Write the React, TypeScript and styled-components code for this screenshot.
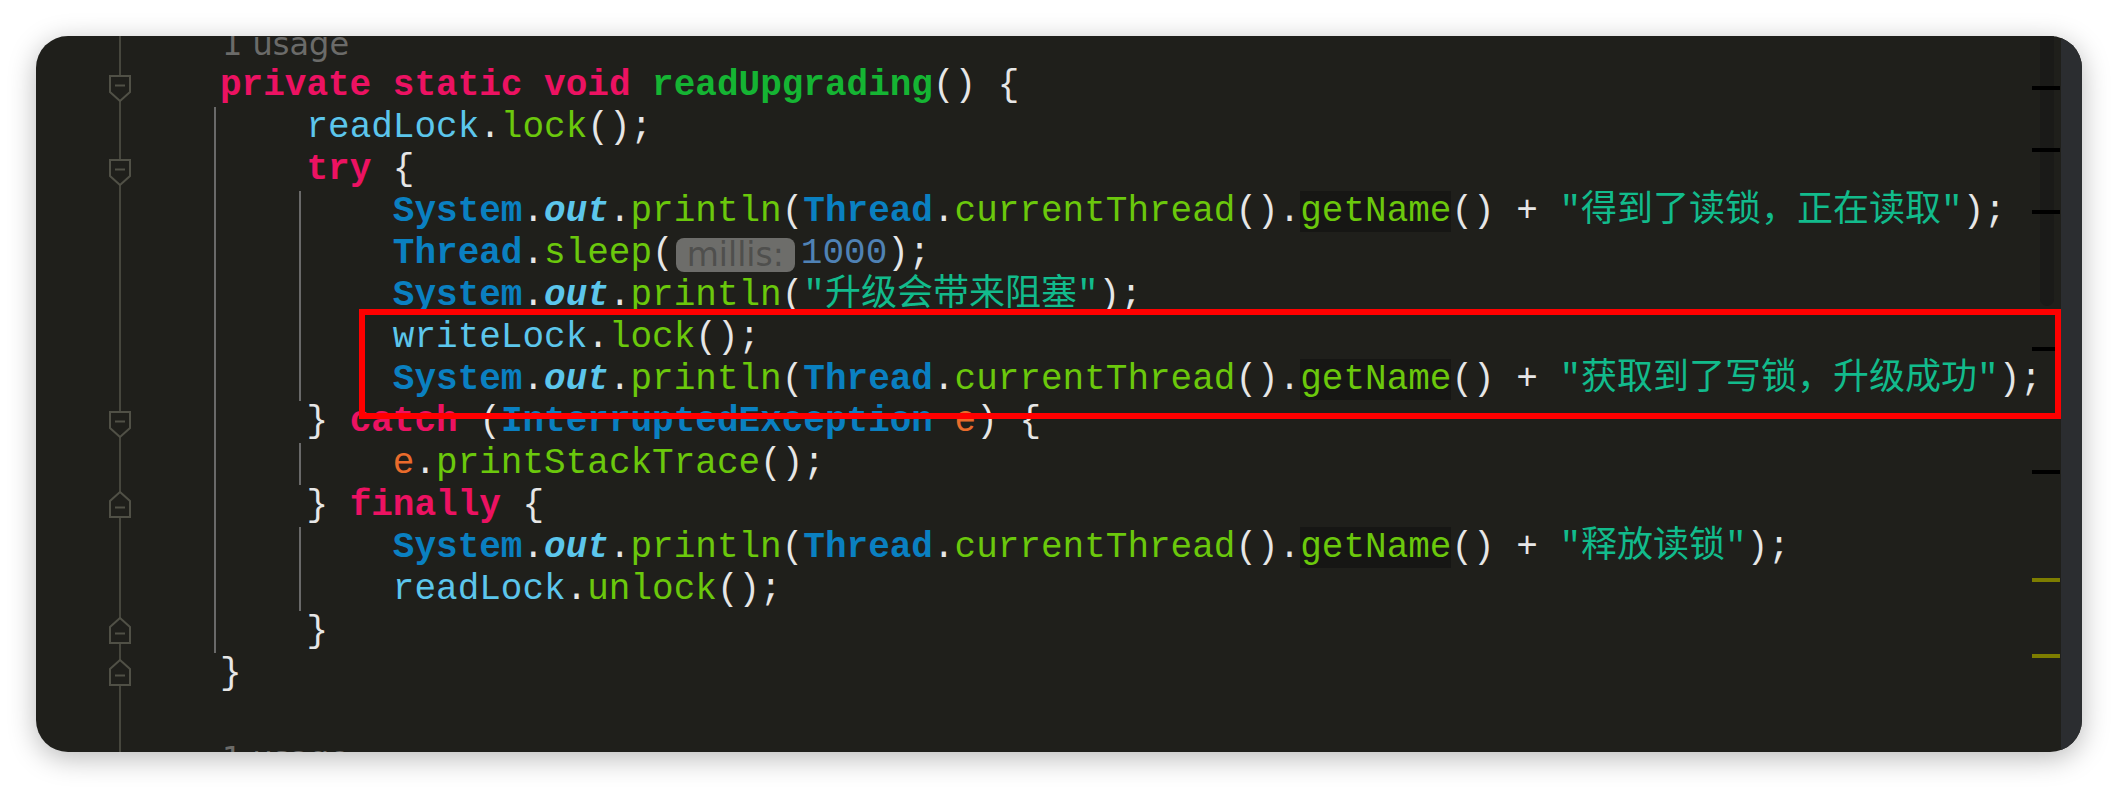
import React from 'react';
import styled, { createGlobalStyle, css } from 'styled-components';

const GlobalStyle = createGlobalStyle`
  html, body { margin: 0; padding: 0; background: #ffffff; }
  body { width: 2118px; height: 788px; overflow: hidden; }
`;

const Page = styled.div`
  box-sizing: border-box;
  width: 2118px;
  height: 788px;
  padding: 36px 0 0 36px;
`;

const Window = styled.div`
  position: relative;
  display: flex;
  width: 2046px;
  height: 716px;
  border-radius: 32px;
  overflow: hidden;
  background: #1f1f1b;
  box-shadow: 0 6px 28px rgba(0, 0, 0, 0.28);
`;

const Editor = styled.div`
  position: relative;
  flex: 1;
  overflow: hidden;
`;

const Lines = styled.div`
  display: flex;
  flex-direction: column;
  margin-top: -12.6px;
`;

const Row = styled.div`
  display: grid;
  grid-template-columns: 184px 1fr;
  height: 42px;
`;

const GutterCell = styled.div`
  display: flex;
  align-items: flex-start;
  padding-left: 73px;
  background: linear-gradient(
    to right,
    transparent 83px,
    #46463d 83px,
    #46463d 85px,
    transparent 85px
  );
`;

const MarkerSvg = styled.svg<{ $up?: boolean }>`
  display: block;
  width: 22px;
  height: 27px;
  margin-top: ${(p) => (p.$up ? '6px' : '10px')};
`;

const FoldMarker = ({ up }: { up?: boolean }) => (
  <MarkerSvg $up={up} viewBox="0 0 22 27">
    {up ? (
      <>
        <path d="M11 1 L21 10 V26 H1 V10 Z" fill="#1f1f1b" stroke="#505046" strokeWidth="2" strokeLinejoin="miter" />
        <line x1="6" y1="16.5" x2="16" y2="16.5" stroke="#505046" strokeWidth="2" />
      </>
    ) : (
      <>
        <path d="M1 1 H21 V17 L11 26 L1 17 Z" fill="#1f1f1b" stroke="#505046" strokeWidth="2" strokeLinejoin="miter" />
        <line x1="6" y1="10.5" x2="16" y2="10.5" stroke="#505046" strokeWidth="2" />
      </>
    )}
  </MarkerSvg>
);

const CodeCell = styled.div`
  position: relative;
  white-space: pre;
  font-family: 'Liberation Mono', 'Noto Sans CJK SC', monospace;
  font-size: 36px;
  line-height: 42px;
  color: #e6e6e6;
`;

const Guide = styled.span<{ $level: number }>`
  position: absolute;
  top: 0;
  bottom: 0;
  width: 2px;
  left: ${(p) => (p.$level === 1 ? '-6px' : '79px')};
  background: #696969;
`;

type Kind = 'kw' | 'fn' | 'field' | 'call' | 'cls' | 'out' | 'str' | 'param' | 'num';

const colors: Record<Kind, string> = {
  kw: '#ec1262',
  fn: '#15b433',
  field: '#5cc6ec',
  call: '#6bc80c',
  cls: '#0a80c1',
  out: '#5cc6ec',
  str: '#12bb8c',
  param: '#e96b2b',
  num: '#4f82b5',
};

const Tok = styled.span<{ $k: Kind }>`
  color: ${(p) => colors[p.$k]};
  ${(p) =>
    (p.$k === 'kw' || p.$k === 'fn' || p.$k === 'cls' || p.$k === 'out') &&
    css`
      font-weight: bold;
    `}
  ${(p) =>
    p.$k === 'out' &&
    css`
      font-style: italic;
    `}
`;

const Highlight = styled.span`
  background: #161614;
  color: ${colors.call};
`;

const UsageHint = styled.span`
  font-family: 'DejaVu Sans', sans-serif;
  font-size: 32px;
  color: #6b6b69;
  padding-left: 2px;
  vertical-align: 3px;
`;

const ParamHint = styled.span`
  display: inline-block;
  vertical-align: top;
  height: 34px;
  margin: 5px 6px 0 2px;
  padding: 0 11px;
  border-radius: 8px;
  background: #6d6d6a;
  color: #4f4f4d;
  font-family: 'DejaVu Sans', sans-serif;
  font-size: 33px;
  line-height: 34px;
`;

const Thumb = styled.div`
  position: absolute;
  top: 0;
  right: 7px;
  width: 14px;
  height: 270px;
  border-radius: 0 0 7px 7px;
  background: #1a1a18;
`;

const Mark = styled.div<{ $warn?: boolean }>`
  position: absolute;
  right: 1px;
  width: 28px;
  height: 4px;
  background: ${(p) => (p.$warn ? '#7d7d00' : '#000000')};
`;

const ScrollStrip = styled.div`
  width: 21px;
  flex: none;
  background: #2b2d30;
`;

const RedBox = styled.div`
  position: absolute;
  left: 323px;
  top: 273px;
  width: 1702px;
  height: 110px;
  box-sizing: border-box;
  border: 6px solid #ff0000;
  pointer-events: none;
`;

const S = ({ k, children }: { k: Kind; children: React.ReactNode }) => <Tok $k={k}>{children}</Tok>;

const SysOut = () => (
  <>
    <S k="cls">System</S>.<S k="out">out</S>.<S k="call">println</S>(
  </>
);

const ThreadName = () => (
  <>
    <S k="cls">Thread</S>.<S k="call">currentThread</S>().<Highlight>getName</Highlight>()
  </>
);

type LineDef = {
  marker?: 'down' | 'up';
  guides?: number[];
  content?: React.ReactNode;
};

const lines: LineDef[] = [
  { content: <UsageHint>1 usage</UsageHint> },
  {
    marker: 'down',
    content: (
      <>
        <S k="kw">private</S> <S k="kw">static</S> <S k="kw">void</S> <S k="fn">readUpgrading</S>() {'{'}
      </>
    ),
  },
  {
    guides: [1],
    content: (
      <>
        {'    '}
        <S k="field">readLock</S>.<S k="call">lock</S>();
      </>
    ),
  },
  {
    marker: 'down',
    guides: [1],
    content: (
      <>
        {'    '}
        <S k="kw">try</S> {'{'}
      </>
    ),
  },
  {
    guides: [1, 2],
    content: (
      <>
        {'        '}
        <SysOut />
        <ThreadName /> + <S k="str">"得到了读锁，正在读取"</S>);
      </>
    ),
  },
  {
    guides: [1, 2],
    content: (
      <>
        {'        '}
        <S k="cls">Thread</S>.<S k="call">sleep</S>(<ParamHint>millis:</ParamHint>
        <S k="num">1000</S>);
      </>
    ),
  },
  {
    guides: [1, 2],
    content: (
      <>
        {'        '}
        <SysOut />
        <S k="str">"升级会带来阻塞"</S>);
      </>
    ),
  },
  {
    guides: [1, 2],
    content: (
      <>
        {'        '}
        <S k="field">writeLock</S>.<S k="call">lock</S>();
      </>
    ),
  },
  {
    guides: [1, 2],
    content: (
      <>
        {'        '}
        <SysOut />
        <ThreadName /> + <S k="str">"获取到了写锁，升级成功"</S>);
      </>
    ),
  },
  {
    marker: 'down',
    guides: [1],
    content: (
      <>
        {'    '}
        {'} '}
        <S k="kw">catch</S> (<S k="cls">InterruptedException</S> <S k="param">e</S>) {'{'}
      </>
    ),
  },
  {
    guides: [1, 2],
    content: (
      <>
        {'        '}
        <S k="param">e</S>.<S k="call">printStackTrace</S>();
      </>
    ),
  },
  {
    marker: 'up',
    guides: [1],
    content: (
      <>
        {'    '}
        {'} '}
        <S k="kw">finally</S> {'{'}
      </>
    ),
  },
  {
    guides: [1, 2],
    content: (
      <>
        {'        '}
        <SysOut />
        <ThreadName /> + <S k="str">"释放读锁"</S>);
      </>
    ),
  },
  {
    guides: [1, 2],
    content: (
      <>
        {'        '}
        <S k="field">readLock</S>.<S k="call">unlock</S>();
      </>
    ),
  },
  {
    marker: 'up',
    guides: [1],
    content: <>{'    }'}</>,
  },
  { marker: 'up', content: <>{'}'}</> },
  {},
  { content: <UsageHint>1 usage</UsageHint> },
  {},
];

const marks: { top: number; warn?: boolean }[] = [
  { top: 50 },
  { top: 112 },
  { top: 174 },
  { top: 311 },
  { top: 434 },
  { top: 542, warn: true },
  { top: 618, warn: true },
];

export default function App() {
  return (
    <>
      <GlobalStyle />
      <Page>
        <Window>
          <Editor>
            <Lines>
              {lines.map((l, i) => (
                <Row key={i}>
                  <GutterCell>{l.marker && <FoldMarker up={l.marker === 'up'} />}</GutterCell>
                  <CodeCell>
                    {(l.guides || []).map((g) => (
                      <Guide key={g} $level={g} />
                    ))}
                    {l.content}
                  </CodeCell>
                </Row>
              ))}
            </Lines>
            <Thumb />
            {marks.map((m, i) => (
              <Mark key={i} $warn={m.warn} style={{ top: m.top }} />
            ))}
          </Editor>
          <ScrollStrip />
          <RedBox />
        </Window>
      </Page>
    </>
  );
}
